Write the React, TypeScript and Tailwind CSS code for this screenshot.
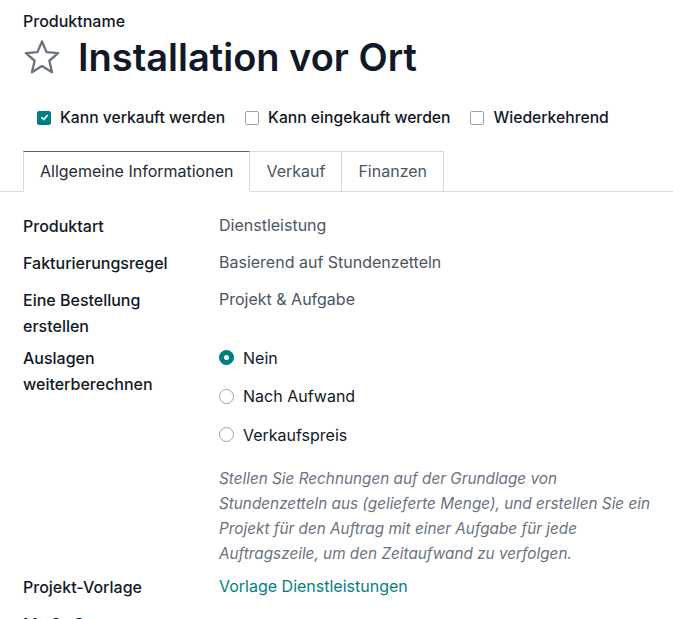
import React from 'react';

const FONT = { fontFamily: 'Inter, Roboto, "Noto Sans", sans-serif' };

const Check = ({ checked, label }: { checked?: boolean; label: string }) => (
  <label className="flex items-center gap-[9px]">
    {checked ? (
      <span className="w-[14px] h-[14px] rounded-[2px] bg-[#017e84] flex items-center justify-center">
        <svg width="9" height="9" viewBox="0 0 10 10">
          <path d="M2 5.2 L4.2 7.3 L8 2.8" fill="none" stroke="white" strokeWidth="1.8" strokeLinecap="round" strokeLinejoin="round" />
        </svg>
      </span>
    ) : (
      <span className="w-[14px] h-[14px] rounded-[2px] border border-[#9ca3af] bg-white" />
    )}
    <span className="text-[15.7px] font-medium text-[#111827]">{label}</span>
  </label>
);

const Radio = ({ checked, label }: { checked?: boolean; label: string }) => (
  <div className="flex items-center gap-[9px] h-[38.5px]">
    {checked ? (
      <span className="w-[15px] h-[15px] rounded-full bg-[#017e84] flex items-center justify-center">
        <span className="w-[5px] h-[5px] rounded-full bg-white" />
      </span>
    ) : (
      <span className="w-[15px] h-[15px] rounded-full border border-[#9ca3af] bg-white" />
    )}
    <span className="text-[16px] text-[#111827]">{label}</span>
  </div>
);

const Row = ({ label, children }: { label: string; children: React.ReactNode }) => (
  <div className="flex">
    <div className="w-[196px] shrink-0 pr-[30px] pt-[6px] text-[16px] leading-[26px] font-medium text-[#111827]">{label}</div>
    <div className="flex-1 py-[6px] text-[16px] leading-[25px] text-[#4b5563]">{children}</div>
  </div>
);

export default function App() {
  return (
    <div className="w-[673px] h-[619px] overflow-hidden bg-white" style={FONT}>
      <div className="px-[23px] pt-[10px]">
        <div className="text-[16px] font-medium text-[#111827] leading-[22px]">Produktname</div>
        <div className="flex items-center gap-[17px]">
          <svg width="38" height="36" viewBox="0 0 24 23" className="shrink-0">
            <path d="M12 1.5 L14.9 8.4 L22.3 9 L16.7 13.9 L18.4 21.2 L12 17.3 L5.6 21.2 L7.3 13.9 L1.7 9 L9.1 8.4 Z" fill="none" stroke="#6b7280" strokeWidth="1.5" strokeLinejoin="round" />
          </svg>
          <h1 className="text-[38px] font-semibold leading-[50px] text-[#111827]">Installation vor Ort</h1>
        </div>
        <div className="flex items-center gap-[20px] mt-[24px] pl-[14px]">
          <Check checked label="Kann verkauft werden" />
          <Check label="Kann eingekauft werden" />
          <Check label="Wiederkehrend" />
        </div>
      </div>

      <div className="flex mt-[21px] border-b border-[#d8dadd]">
        <div className="w-[23px] shrink-0" />
        <div className="flex -mb-px">
          <div className="px-[16px] h-[41px] flex items-center border border-[#d8dadd] border-t-[#6b5b6e] border-b-white bg-white text-[16px] text-[#1f2937]">Allgemeine Informationen</div>
          <div className="px-[16px] h-[41px] flex items-center border-y border-r border-[#d8dadd] text-[16px] text-[#4b5563]">Verkauf</div>
          <div className="px-[16px] h-[41px] flex items-center border-y border-r border-[#d8dadd] text-[16px] text-[#4b5563]">Finanzen</div>
        </div>
      </div>

      <div className="pl-[23px] pr-[10px] pt-[15px]">
        <Row label="Produktart">Dienstleistung</Row>
        <Row label="Fakturierungsregel">Basierend auf Stundenzetteln</Row>
        <Row label="Eine Bestellung erstellen">Projekt &amp; Aufgabe</Row>
        <div className="flex">
          <div className="w-[196px] shrink-0 pr-[30px] pt-[6px] text-[16px] leading-[26px] font-medium text-[#111827]">Auslagen weiterberechnen</div>
          <div className="flex-1">
            <Radio checked label="Nein" />
            <Radio label="Nach Aufwand" />
            <Radio label="Verkaufspreis" />
            <p className="mt-[12px] text-[15.3px] leading-[25px] italic text-[#6b7280]">
              Stellen Sie Rechnungen auf der Grundlage von Stundenzetteln aus (gelieferte Menge), und erstellen Sie ein Projekt für den Auftrag mit einer Aufgabe für jede Auftragszeile, um den Zeitaufwand zu verfolgen.
            </p>
          </div>
        </div>
        <div className="mt-[2px]">
          <Row label="Projekt-Vorlage"><span className="text-[#017e84]">Vorlage Dienstleistungen</span></Row>
        </div>
        <Row label="MwSt-Satz">–</Row>
      </div>
    </div>
  );
}
